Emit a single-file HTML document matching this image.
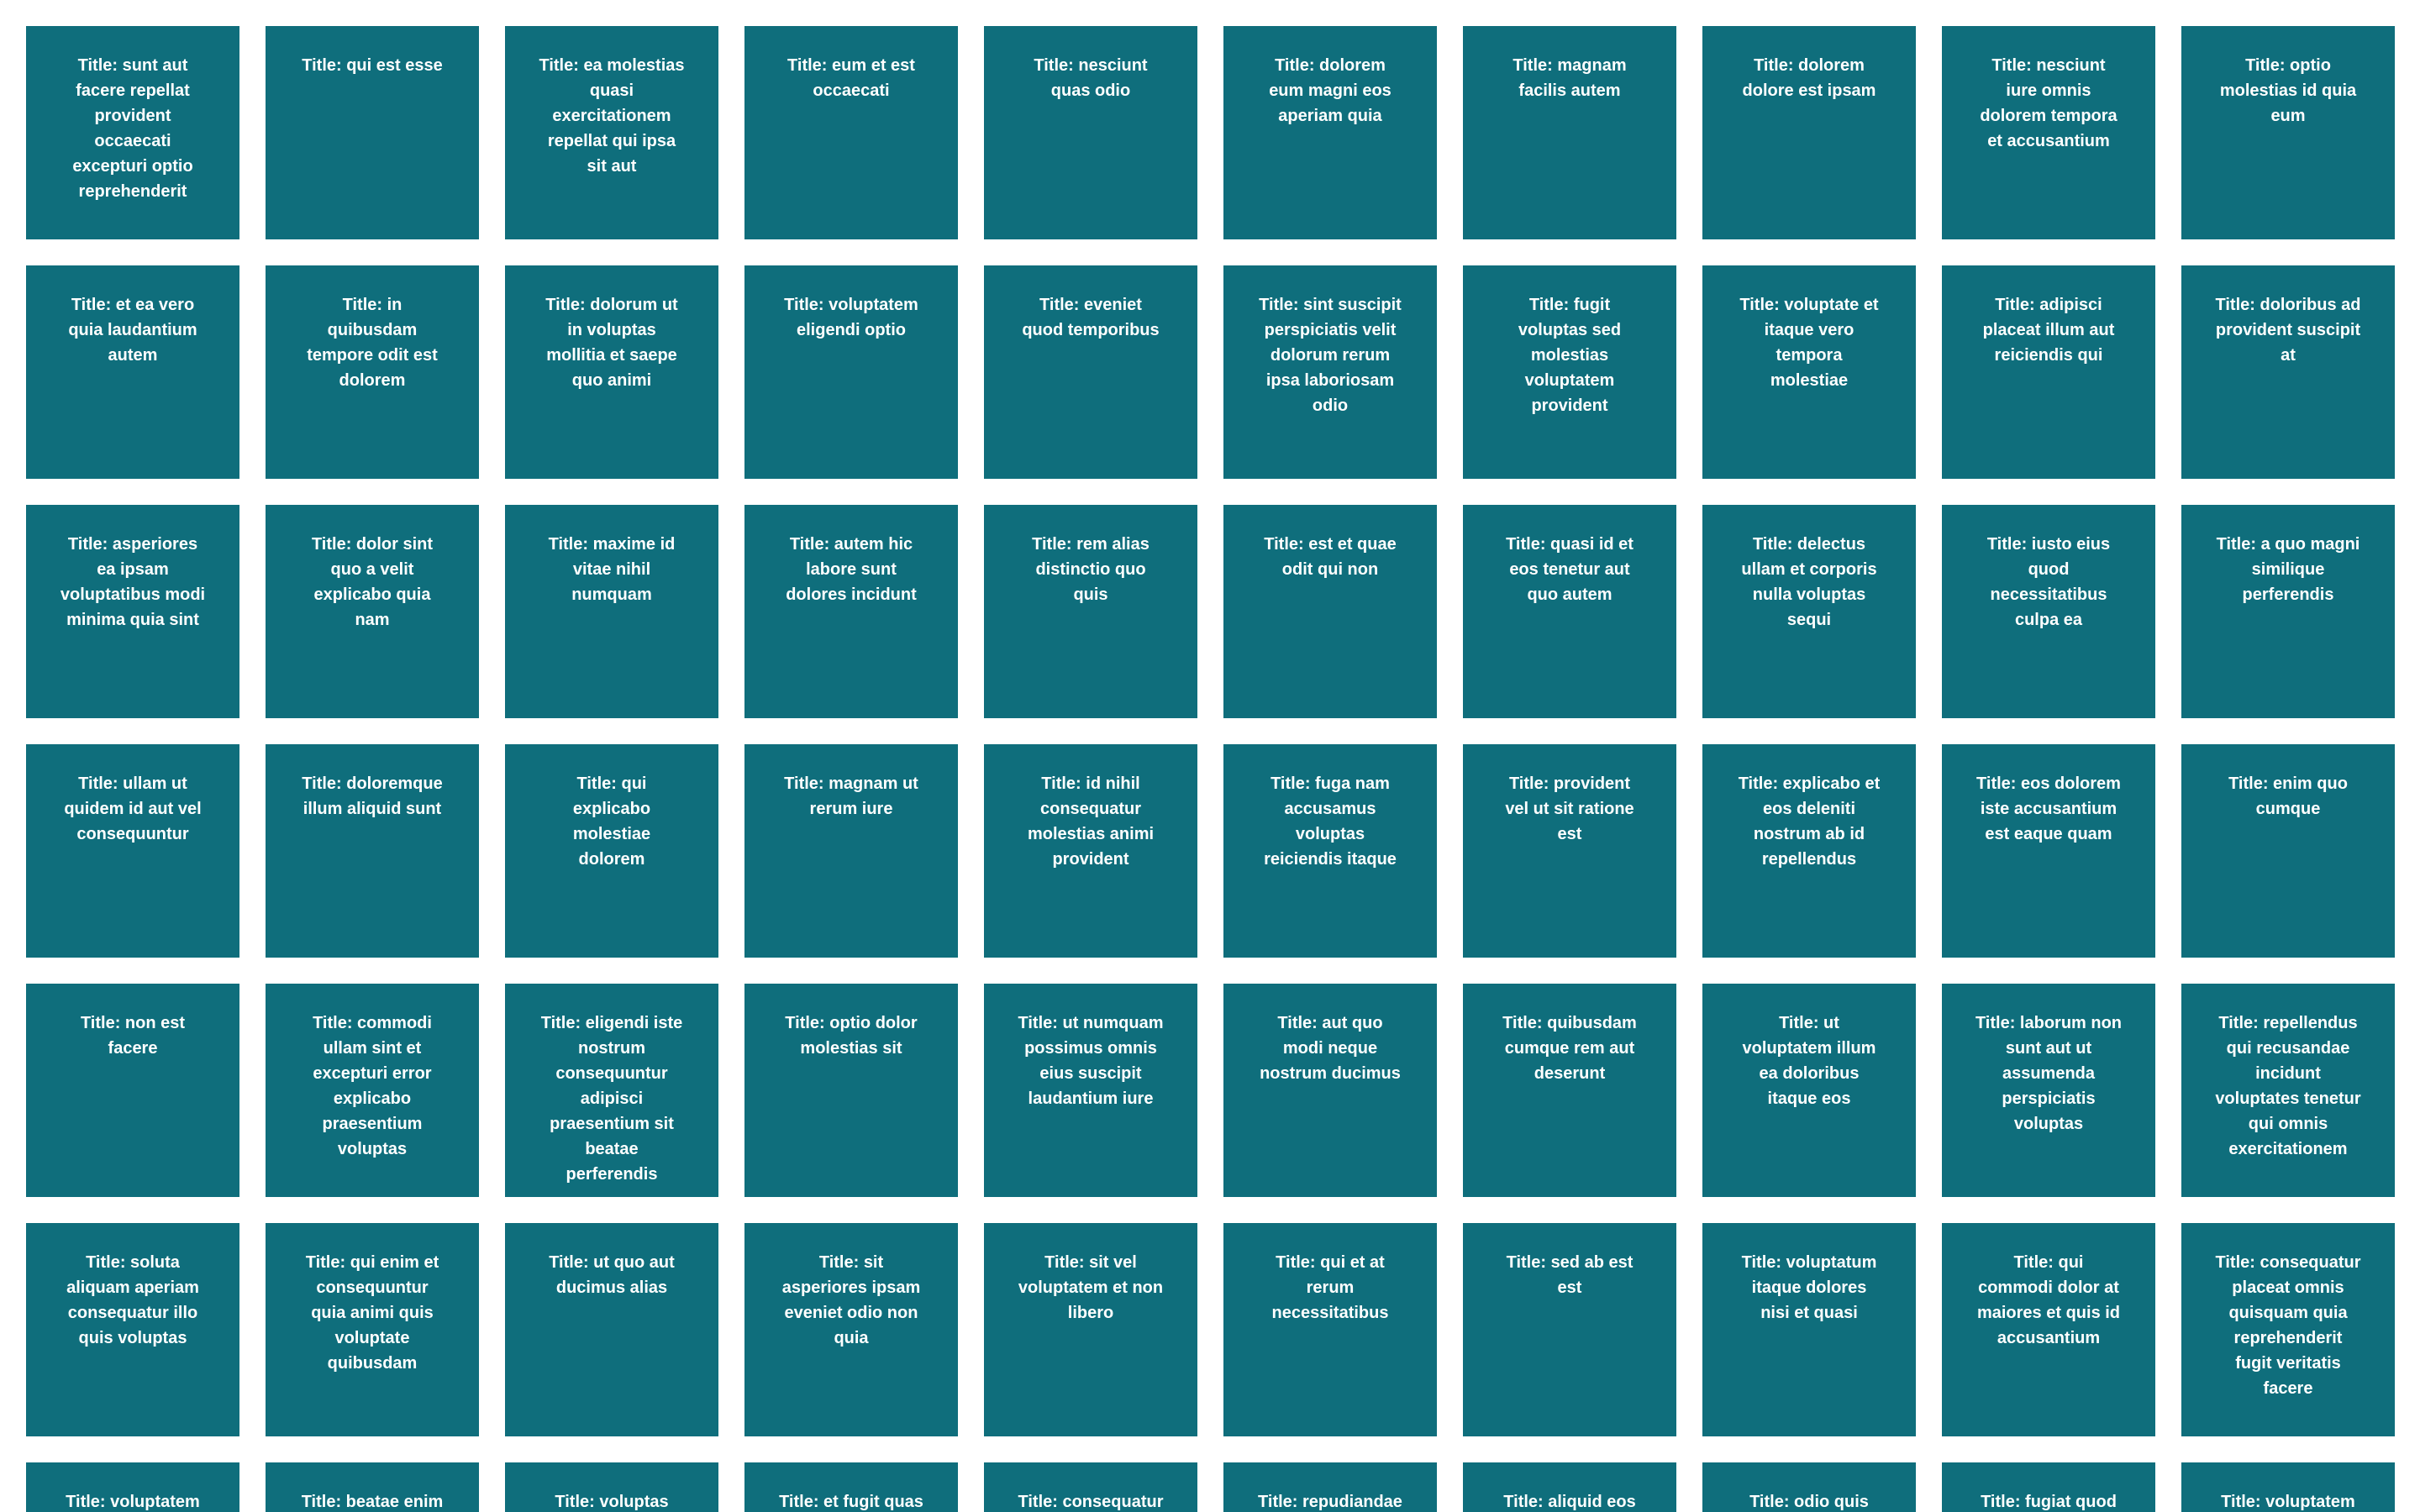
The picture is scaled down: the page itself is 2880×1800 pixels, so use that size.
<!DOCTYPE html>
<html><head><meta charset="utf-8"><style>
html,body{margin:0;padding:0;background:#fff;width:2880px;height:1800px;overflow:hidden}
.w{position:relative;width:2880px;height:1800px;overflow:hidden}
.g{position:absolute;left:31px;top:31px;display:grid;grid-template-columns:repeat(10,254px);grid-auto-rows:254px;column-gap:31px;row-gap:31px}
.t{background:#0f6e7c;color:#fff;font-family:"Liberation Sans",sans-serif;font-weight:bold;font-size:20px;line-height:30px;text-align:center;padding:32px 39px;box-sizing:border-box}
</style></head><body><div class="w"><div class="g">
<div class="t">Title: sunt aut facere repellat provident occaecati excepturi optio reprehenderit</div>
<div class="t">Title: qui est esse</div>
<div class="t">Title: ea molestias quasi exercitationem repellat qui ipsa sit aut</div>
<div class="t">Title: eum et est occaecati</div>
<div class="t">Title: nesciunt quas odio</div>
<div class="t">Title: dolorem eum magni eos aperiam quia</div>
<div class="t">Title: magnam facilis autem</div>
<div class="t">Title: dolorem dolore est ipsam</div>
<div class="t">Title: nesciunt iure omnis dolorem tempora et accusantium</div>
<div class="t">Title: optio molestias id quia eum</div>
<div class="t">Title: et ea vero quia laudantium autem</div>
<div class="t">Title: in quibusdam tempore odit est dolorem</div>
<div class="t">Title: dolorum ut in voluptas mollitia et saepe quo animi</div>
<div class="t">Title: voluptatem eligendi optio</div>
<div class="t">Title: eveniet quod temporibus</div>
<div class="t">Title: sint suscipit perspiciatis velit dolorum rerum ipsa laboriosam odio</div>
<div class="t">Title: fugit voluptas sed molestias voluptatem provident</div>
<div class="t">Title: voluptate et itaque vero tempora molestiae</div>
<div class="t">Title: adipisci placeat illum aut reiciendis qui</div>
<div class="t">Title: doloribus ad provident suscipit at</div>
<div class="t">Title: asperiores ea ipsam voluptatibus modi minima quia sint</div>
<div class="t">Title: dolor sint quo a velit explicabo quia nam</div>
<div class="t">Title: maxime id vitae nihil numquam</div>
<div class="t">Title: autem hic labore sunt dolores incidunt</div>
<div class="t">Title: rem alias distinctio quo quis</div>
<div class="t">Title: est et quae odit qui non</div>
<div class="t">Title: quasi id et eos tenetur aut quo autem</div>
<div class="t">Title: delectus ullam et corporis nulla voluptas sequi</div>
<div class="t">Title: iusto eius quod necessitatibus culpa ea</div>
<div class="t">Title: a quo magni similique perferendis</div>
<div class="t">Title: ullam ut quidem id aut vel consequuntur</div>
<div class="t">Title: doloremque illum aliquid sunt</div>
<div class="t">Title: qui explicabo molestiae dolorem</div>
<div class="t">Title: magnam ut rerum iure</div>
<div class="t">Title: id nihil consequatur molestias animi provident</div>
<div class="t">Title: fuga nam accusamus voluptas reiciendis itaque</div>
<div class="t">Title: provident vel ut sit ratione est</div>
<div class="t">Title: explicabo et eos deleniti nostrum ab id repellendus</div>
<div class="t">Title: eos dolorem iste accusantium est eaque quam</div>
<div class="t">Title: enim quo cumque</div>
<div class="t">Title: non est facere</div>
<div class="t">Title: commodi ullam sint et excepturi error explicabo praesentium voluptas</div>
<div class="t">Title: eligendi iste nostrum consequuntur adipisci praesentium sit beatae perferendis</div>
<div class="t">Title: optio dolor molestias sit</div>
<div class="t">Title: ut numquam possimus omnis eius suscipit laudantium iure</div>
<div class="t">Title: aut quo modi neque nostrum ducimus</div>
<div class="t">Title: quibusdam cumque rem aut deserunt</div>
<div class="t">Title: ut voluptatem illum ea doloribus itaque eos</div>
<div class="t">Title: laborum non sunt aut ut assumenda perspiciatis voluptas</div>
<div class="t">Title: repellendus qui recusandae incidunt voluptates tenetur qui omnis exercitationem</div>
<div class="t">Title: soluta aliquam aperiam consequatur illo quis voluptas</div>
<div class="t">Title: qui enim et consequuntur quia animi quis voluptate quibusdam</div>
<div class="t">Title: ut quo aut ducimus alias</div>
<div class="t">Title: sit asperiores ipsam eveniet odio non quia</div>
<div class="t">Title: sit vel voluptatem et non libero</div>
<div class="t">Title: qui et at rerum necessitatibus</div>
<div class="t">Title: sed ab est est</div>
<div class="t">Title: voluptatum itaque dolores nisi et quasi</div>
<div class="t">Title: qui commodi dolor at maiores et quis id accusantium</div>
<div class="t">Title: consequatur placeat omnis quisquam quia reprehenderit fugit veritatis facere</div>
<div class="t">Title: voluptatem doloribus consectetur est ut ducimus</div>
<div class="t">Title: beatae enim quia vel</div>
<div class="t">Title: voluptas blanditiis repellendus animi ducimus error sapiente et suscipit</div>
<div class="t">Title: et fugit quas eum in in aperiam quod</div>
<div class="t">Title: consequatur id enim sunt et et</div>
<div class="t">Title: repudiandae ea animi iusto</div>
<div class="t">Title: aliquid eos sed fuga est maxime repellendus</div>
<div class="t">Title: odio quis facere architecto reiciendis optio</div>
<div class="t">Title: fugiat quod pariatur odit minima</div>
<div class="t">Title: voluptatem laborum magni</div>
</div></div></body></html>
